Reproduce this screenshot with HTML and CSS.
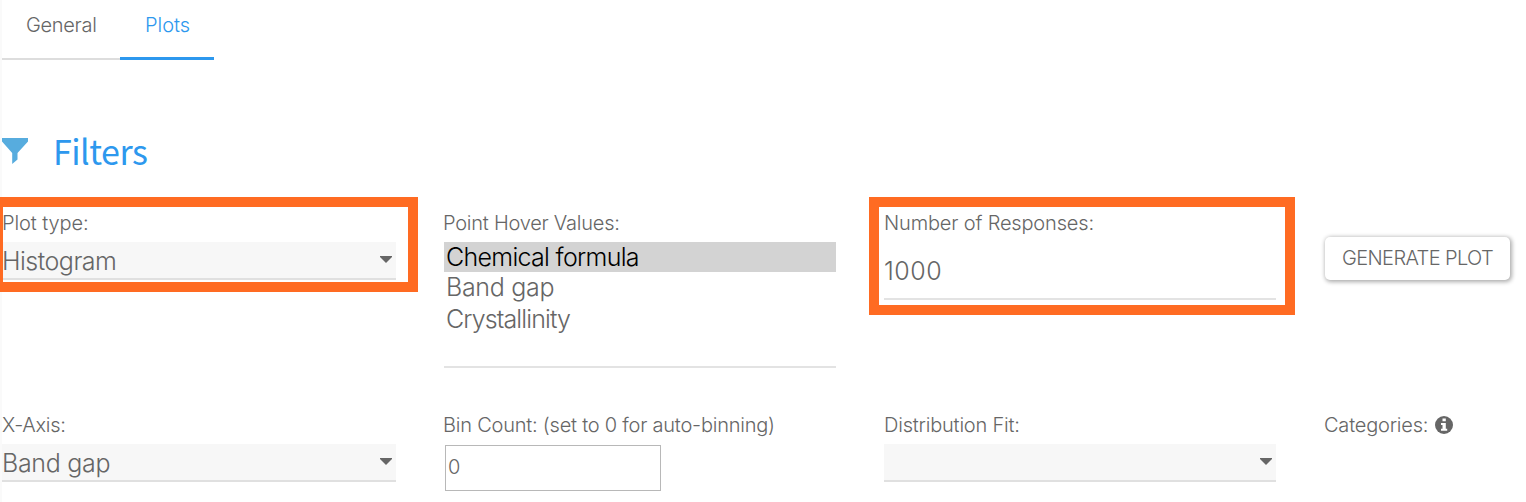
FILE: index.html
```
<!DOCTYPE html>
<html lang="en">
<head>
<meta charset="utf-8">
<title>Plots</title>
<link rel="stylesheet" href="styles.css">
</head>
<body>
<main class="page">
  <nav class="tabs">
    <a class="tab tab-general"><span class="t-general">General</span></a>
    <a class="tab tab-active"><span class="t-plots">Plots</span></a>
  </nav>
  <header class="heading">
    <svg class="funnel" width="26" height="26" viewBox="0 0 26 26"><path d="M0 0H26V3.500L15.500 15V21.500L10.200 26V15L0 3.500Z" fill="#57acde"/></svg>
    <h1>Filters</h1>
  </header>
  <section class="filters row-one">
    <div class="field">
      <label><span class="t-plottype">Plot type:</span></label>
      <div class="select"><span class="t-hist">Histogram</span><svg class="caret" width="12" height="7" viewBox="0 0 12 7"><path d="M0 0H12V1L6 7L0 1Z"/></svg></div>
      <div class="highlight highlight-type"></div>
    </div>
    <div class="field">
      <label class="outdent"><span class="t-hover">Point Hover Values:</span></label>
      <div class="list">
        <div class="option selected"><span class="t-chem">Chemical formula</span></div>
        <div class="option"><span class="t-band">Band gap</span></div>
        <div class="option"><span class="t-cryst">Crystallinity</span></div>
      </div>
    </div>
    <div class="field">
      <label><span class="t-number">Number of Responses:</span></label>
      <div class="number"><span class="t-thousand">1000</span></div>
      <div class="highlight highlight-number"></div>
    </div>
    <div class="field">
      <button class="generate"><span class="t-generate">GENERATE PLOT</span></button>
    </div>
  </section>
  <section class="filters row-two">
    <div class="field">
      <label><span class="t-xaxis">X-Axis:</span></label>
      <div class="select"><span class="t-band">Band gap</span><svg class="caret" width="12" height="7" viewBox="0 0 12 7"><path d="M0 0H12V1L6 7L0 1Z"/></svg></div>
    </div>
    <div class="field">
      <label class="outdent"><span class="t-bin">Bin Count: (set to 0 for auto-binning)</span></label>
      <div class="bin">0</div>
    </div>
    <div class="field">
      <label><span class="t-dist">Distribution Fit:</span></label>
      <div class="select"><span></span><svg class="caret" width="12" height="7" viewBox="0 0 12 7"><path d="M0 0H12V1L6 7L0 1Z"/></svg></div>
    </div>
    <div class="field">
      <label class="with-icon"><span class="t-cat">Categories:</span><svg class="info" width="18" height="18" viewBox="0 0 18 18"><circle cx="9" cy="9" r="9" fill="#666"/><path d="M7.500 2.500H10.800V5.300H7.500ZM6 7H10.800V12.800H12.200V14.800H6V12.800H7.500V9H6Z" fill="#fff"/></svg></label>
    </div>
  </section>
</main>
</body>
</html>
```
FILE: styles.css
```
* { box-sizing: border-box; }
body {
  margin: 0;
  background: #fff;
  color: #666;
  font-family: Inter, "Liberation Sans", sans-serif;
  font-weight: 300;
  font-size: 20px;
  overflow: hidden;
}
.page { height: 502px; border-left: 2px solid #fafafa; }
span { white-space: nowrap; }
.tabs { display: flex; height: 60px; }
.tab { height: 60px; line-height: 50px; border-bottom: 2px solid #ddd; }
.tab-general { width: 118px; padding-left: 24px; }
.tab-active { width: 94px; padding-left: 25px; color: #2d98ee; border-bottom: 3px solid #2d98ee; }
.heading { display: flex; margin-top: 78px; height: 72px; gap: 25px; }
h1 {
  margin: -5px 0 0;
  font-family: "Noto Sans CJK SC", sans-serif;
  font-size: 34px;
  letter-spacing: -.5px;
  line-height: 36px;
  font-weight: 400;
  color: #2d98ee;
}
.filters { display: grid; grid-template-columns: 394px 392px 392px 187px; column-gap: 48px; }
.row-one { height: 202px; }
.field { position: relative; }
label { display: block; height: 32px; line-height: 27px; }
.outdent { margin-left: -1px; }
.with-icon { display: flex; gap: 7px; }
.info { margin-top: 4px; }
.select {
  display: flex;
  justify-content: space-between;
  height: 38px;
  padding: 0 4px 0 0;
  font-size: 25px;
  line-height: 38px;
  background: #f7f7f7;
  border-bottom: 2px solid #e0e0e0;
}
.caret { margin-top: 14px; fill: #666; }
.list { height: 126px; border-bottom: 2px solid #e3e3e3; font-size: 25px; }
.option { height: 32px; line-height: 31px; padding-left: 2px; }
.option.selected { height: 30px; background: #d3d3d3; color: #000; }
.number { height: 58px; line-height: 59px; font-size: 25px; border-bottom: 2px solid #e3e3e3; }
.highlight { position: absolute; border: 10px solid #ff6b22; }
.highlight-type { left: -9px; top: -13px; width: 425px; height: 95px; }
.highlight-number { left: -15px; top: -13px; width: 426px; height: 118px; }
.generate {
  display: block;
  margin: 27px 0 0 1px;
  width: 185px;
  height: 43px;
  padding: 0 0 2px;
  border: 0;
  border-radius: 5px;
  background: #fff;
  color: #666;
  font: inherit;
  box-shadow: 1px 1px 4px 1px rgba(0, 0, 0, .33);
}
.bin { margin: 1px 0 0 1px; width: 216px; height: 46px; line-height: 43px; padding-left: 2px; border: 1px solid #b8b8b8; }
.t-general { letter-spacing: -.3px; }
.t-plottype { letter-spacing: -.1px; }
.t-hover { letter-spacing: -.24px; }
.t-number { letter-spacing: -.16px; }
.t-hist { letter-spacing: -.5px; }
.t-chem { letter-spacing: -.7px; }
.t-band { letter-spacing: -.3px; }
.t-cryst { letter-spacing: -.9px; }
.t-thousand { letter-spacing: .5px; }
.t-generate { letter-spacing: -.62px; }
.t-xaxis { letter-spacing: -.3px; }
.t-bin { letter-spacing: -.22px; }
.t-dist { letter-spacing: -.2px; }
.t-cat { letter-spacing: -.2px; }
```
